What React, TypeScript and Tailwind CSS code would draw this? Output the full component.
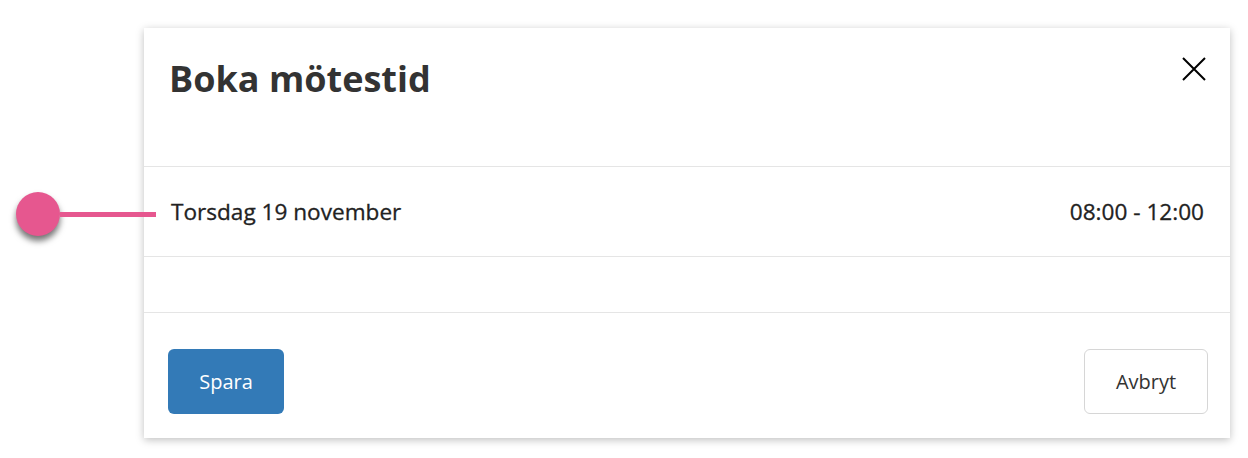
const CloseIcon = () => (
  <svg width="24" height="24" viewBox="0 0 24 24" fill="none" stroke="currentColor" strokeWidth="2">
    <path d="M1 1L23 23M23 1L1 23" />
  </svg>
);

const BookingModal = () => {
  return (
    <div className="relative flex h-[410px] w-[1086px] flex-col bg-white shadow-[0_2px_8px_rgba(0,0,0,0.25)]">
      {/* header */}
      <div className="flex h-[139px] items-start justify-between border-b border-[#e5e5e5] pl-[25px] pr-[24px] pt-[27px]">
        <h2 className="text-[36px] font-bold leading-[48px] text-[#333]">
          Boka mötestid
        </h2>
        <button type="button" aria-label="Stäng" className="mt-[2px] text-black">
          <CloseIcon />
        </button>
      </div>

      {/* selected slot */}
      <div className="flex h-[90px] items-center justify-between border-b border-[#e5e5e5] pl-[27px] pr-[26px] text-[22.6px] text-[#222] [-webkit-text-stroke:0.3px_#222]">
        <span>Torsdag 19 november</span>
        <span>08:00 - 12:00</span>
      </div>

      <div className="h-[56px] border-b border-[#e5e5e5]" />

      {/* footer */}
      <div className="flex flex-1 items-start justify-between pl-[24px] pr-[22px] pt-[36px]">
        <button
          type="button"
          className="h-[65px] w-[116px] rounded-[6px] bg-[#337ab7] text-[20px] text-white"
        >
          Spara
        </button>
        <button
          type="button"
          className="h-[65px] w-[124px] rounded-[6px] border border-[#d6d6d6] bg-white text-[20px] text-[#333]"
        >
          Avbryt
        </button>
      </div>
    </div>
  );
};

export default function App() {
  return (
    <div className="relative h-[458px] w-[1248px] bg-white pl-[144px] pt-[28px] font-['Open_Sans',sans-serif]">
      <BookingModal />

      {/* callout marker */}
      <div className="absolute left-[16px] top-[192px] flex items-center">
        <div className="h-[44px] w-[44px] rounded-full bg-[#e6578f] shadow-[0_5px_6px_rgba(0,0,0,0.55)]" />
        <div className="h-[5px] w-[96px] bg-[#e6578f]" />
      </div>
    </div>
  );
}
